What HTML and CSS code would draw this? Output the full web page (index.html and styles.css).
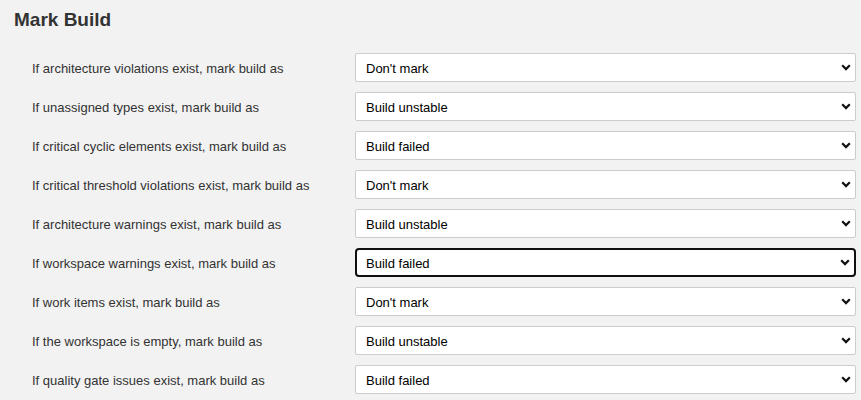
FILE: index.html
```html
<!DOCTYPE html>
<html>
<head>
<meta charset="utf-8">
<link rel="stylesheet" href="styles.css">
</head>
<body>
<div class="page">
  <h2 class="title">Mark Build</h2>
  <div class="rows">
    <label class="row"><span class="label">If architecture violations exist, mark build as</span>
      <select class="sel"><option>Don't mark</option><option>Build unstable</option><option>Build failed</option></select></label>
    <label class="row"><span class="label">If unassigned types exist, mark build as</span>
      <select class="sel"><option>Build unstable</option></select></label>
    <label class="row"><span class="label">If critical cyclic elements exist, mark build as</span>
      <select class="sel"><option>Build failed</option></select></label>
    <label class="row"><span class="label">If critical threshold violations exist, mark build as</span>
      <select class="sel"><option>Don't mark</option></select></label>
    <label class="row"><span class="label">If architecture warnings exist, mark build as</span>
      <select class="sel"><option>Build unstable</option></select></label>
    <label class="row"><span class="label">If workspace warnings exist, mark build as</span>
      <select class="sel focused"><option>Build failed</option></select></label>
    <label class="row"><span class="label">If work items exist, mark build as</span>
      <select class="sel"><option>Don't mark</option></select></label>
    <label class="row"><span class="label">If the workspace is empty, mark build as</span>
      <select class="sel"><option>Build unstable</option></select></label>
    <label class="row"><span class="label">If quality gate issues exist, mark build as</span>
      <select class="sel"><option>Build failed</option></select></label>
  </div>
</div>
</body>
</html>
```
FILE: styles.css
```css
html, body {
  margin: 0;
  background: #f2f2f2;
}
.page {
  padding: 9px 5px 0 14px;
  font-family: "Liberation Sans", Arial, sans-serif;
  color: #333;
}
.title {
  margin: 0;
  font-size: 19px;
  font-weight: bold;
  line-height: 22px;
  color: #333;
}
.rows {
  margin-top: 22px;
  padding-left: 18px;
  display: flex;
  flex-direction: column;
  gap: 10px;
}
.row {
  display: flex;
  align-items: center;
  height: 29px;
}
.label {
  width: 323px;
  flex: none;
  font-size: 13px;
  padding-top: 1px;
}
.sel {
  flex: 1;
  height: 29px;
  box-sizing: border-box;
  border: 1px solid #ccc;
  border-radius: 2px;
  background: #fff;
  font-family: "Liberation Sans", Arial, sans-serif;
  font-size: 13px;
  color: #000;
  padding: 1px 6px 0 10px;
  margin: 0;
  appearance: none;
  -webkit-appearance: none;
  background-image: url("data:image/svg+xml,%3Csvg xmlns='http://www.w3.org/2000/svg' width='10' height='7' viewBox='0 0 10 7'%3E%3Cpath d='M1.2 1.3L5 5.1L8.8 1.3' fill='none' stroke='%23111' stroke-width='2.2'/%3E%3C/svg%3E");
  background-repeat: no-repeat;
  background-position: right 4px center;
  background-size: 10px 7px;
  outline: none;
}
.sel.focused {
  border: 2px solid #101010;
  border-radius: 4px;
  padding-left: 9px;
}
```
